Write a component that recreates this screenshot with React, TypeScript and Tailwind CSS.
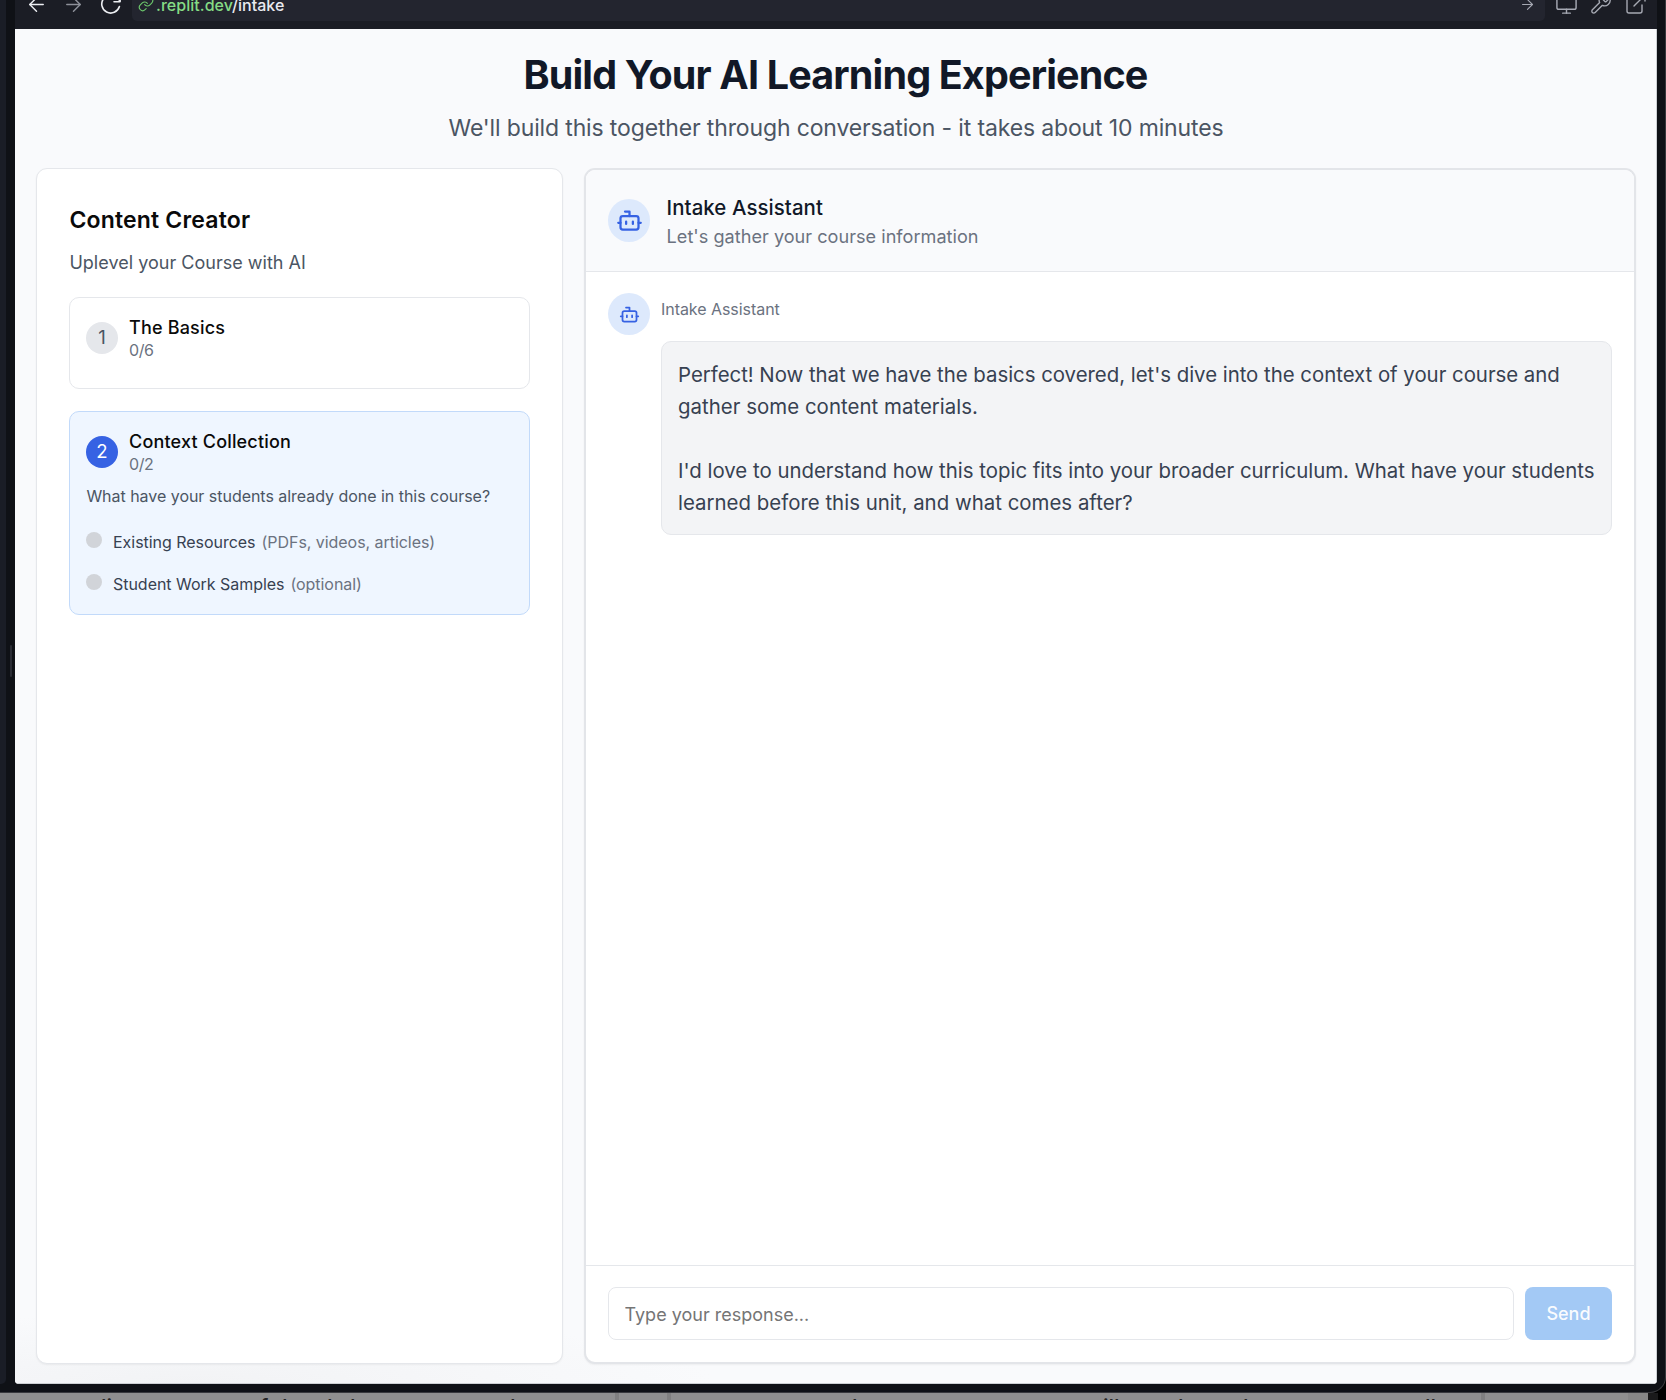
import type { ReactNode } from "react";
import { ArrowLeft, ArrowRight, Bot, ExternalLink, Link, Monitor, Wrench } from "lucide-react";

function Reload() {
  return (
    <svg viewBox="0 0 24 24" className="size-6" fill="none" stroke="currentColor" strokeWidth="1.6" strokeLinecap="round" strokeLinejoin="round">
      <path d="M20.4 14.6A9 9 0 1 1 18.6 6.2L21 9" />
      <path d="M21 3.6V9.8H15" />
    </svg>
  );
}

function BrowserBar() {
  return (
    <div className="h-[29px] shrink-0 overflow-hidden bg-[#1b1d25]">
      <div className="-mt-[20px] flex h-12 items-center text-[#a6a9b3]">
        <ArrowLeft className="ml-2.5 size-[23px] text-[#eceef2]" strokeWidth={1.5} />
        <ArrowRight className="ml-3.5 size-[23px] text-[#8d9099]" strokeWidth={1.5} />
        <div className="ml-3.5 text-[#eceef2]">
          <Reload />
        </div>
        <div className="ml-[9px] flex h-[34px] w-[1413px] items-center rounded-[5px] bg-[#23252f]">
          <Link className="ml-1.5 size-4 text-[#6cc76c]" strokeWidth={1.7} />
          <span className="ml-[2px] pt-[2px] text-base font-medium tracking-[0.002em] text-[#85dc85]">
            .replit.dev<span className="text-[#e9eaf0]">/intake</span>
          </span>
          <ArrowRight className="mr-[9px] ml-auto size-[17px]" strokeWidth={1.5} />
        </div>
        <Monitor className="ml-2.5 size-[23px]" strokeWidth={1.5} />
        <Wrench className="ml-3 size-[22px]" strokeWidth={1.5} />
        <ExternalLink className="ml-3 size-6" strokeWidth={1.4} />
      </div>
    </div>
  );
}

function StepHeader({ n, title, count, active }: { n: number; title: string; count: string; active?: boolean }) {
  return (
    <div className="flex items-start gap-[11px]">
      <div
        className={
          active
            ? "mt-[6px] flex size-8 items-center justify-center rounded-full bg-[#3662e3] text-[18.6px] text-white"
            : "mt-[6px] flex size-8 items-center justify-center rounded-full bg-[#e5e7eb] text-[18.6px] text-[#4b5563]"
        }
      >
        {n}
      </div>
      <div>
        <div className="text-[18px] leading-6 font-medium tracking-[0.01em] text-[#0a0a0a]">{title}</div>
        <div className="text-base leading-[21px] tracking-[-0.025em] text-[#6b7280]">{count}</div>
      </div>
    </div>
  );
}

function Resource({ name, note }: { name: string; note: string }) {
  return (
    <div className="flex h-[42px] items-start">
      <div className="mt-[11px] size-4 rounded-full bg-[#d1d4d9]" />
      <div className="ml-[11px] pt-[11px] text-base leading-[21px] tracking-[-0.002em] text-[#374151]">
        {name}
        <span className="ml-1.5 tracking-[-0.003em] text-[#6b7280]">{note}</span>
      </div>
    </div>
  );
}

function Avatar({ children }: { children: ReactNode }) {
  return (
    <div className="flex size-[42.4px] shrink-0 items-center justify-center rounded-full bg-[#dde9fc] text-[#3662e3]">
      {children}
    </div>
  );
}

function Sidebar() {
  return (
    <aside className="w-[527px] shrink-0 rounded-[11px] border border-[#e5e7eb] bg-white px-8 pt-[35px] shadow-xs">
      <h2 className="ml-[0.4px] text-[23px] leading-8 font-semibold tracking-[0.008em] text-[#0a0a0a]">Content Creator</h2>
      <p className="mt-3.5 ml-[0.4px] text-[18px] leading-[26px] tracking-[0.001em] text-[#4b5563]">
        Uplevel your Course with AI
      </p>
      <div className="mt-[21px] h-[92px] rounded-[10px] border border-[#e5e7eb] px-4 pt-[18px]">
        <StepHeader n={1} title="The Basics" count="0/6" />
      </div>
      <div className="mt-[22px] h-[204px] rounded-[10px] border border-[#c2dafa] bg-[#eff6ff] px-4 pt-[18px]">
        <StepHeader n={2} title="Context Collection" count="0/2" active />
        <p className="mt-[11px] ml-[0.4px] text-base leading-[21px] tracking-[-0.002em] whitespace-nowrap text-[#4b5563]">
          What have your students already done in this course?
        </p>
        <div className="mt-[14px]">
          <Resource name="Existing Resources" note="(PDFs, videos, articles)" />
          <Resource name="Student Work Samples" note="(optional)" />
        </div>
      </div>
    </aside>
  );
}

function Chat() {
  return (
    <section className="flex w-[1052px] shrink-0 flex-col overflow-hidden rounded-[11px] border-2 border-[#e3e5e9] bg-white shadow-xs">
      <header className="flex h-[102px] shrink-0 items-center border-b border-[#e5e7eb] bg-[#f9fafc] px-[22px]">
        <Avatar>
          <Bot className="size-[27px]" strokeWidth={2} />
        </Avatar>
        <div className="ml-[16.2px] pt-px">
          <div className="text-[20.4px] leading-[30px] font-medium tracking-[0.004em] text-[#111827]">Intake Assistant</div>
          <div className="text-[18.1px] leading-[27px] tracking-[0.001em] text-[#6b7280]">
            Let's gather your course information
          </div>
        </div>
      </header>
      <div className="flex flex-1 items-start px-[22px] pt-[21px]">
        <Avatar>
          <Bot className="size-[21px]" strokeWidth={2} />
        </Avatar>
        <div className="ml-[10.6px]">
          <div className="mt-[5px] text-base leading-[22px] tracking-[-0.003em] text-[#6b7280]">Intake Assistant</div>
          <div className="mt-[21px] h-[194px] w-[951px] rounded-[10px] border border-[#e5e7eb] bg-[#f3f4f6] px-4 pt-[17px] text-[20.4px] leading-8 whitespace-pre text-[#374151]">
            <p>
              <span className="tracking-[-0.001em]">
                Perfect! Now that we have the basics covered, let's dive into the context of your course and
              </span>
              {"\n"}
              <span className="tracking-[0.002em]">gather some content materials.</span>
            </p>
            <p className="mt-8">
              I'd love to understand how this topic fits into your broader curriculum. What have your students{"\n"}
              <span className="tracking-[0.001em]">learned before this unit, and what comes after?</span>
            </p>
          </div>
        </div>
      </div>
      <footer className="flex h-[97px] shrink-0 items-start gap-[11px] border-t border-[#e5e7eb] px-[22px] pt-[21px]">
        <input
          className="h-[53px] w-[906px] rounded-lg border border-[#e5e7eb] bg-white px-[15.5px] pt-px text-[18px] text-[#374151] outline-none placeholder:text-[#757575]"
          placeholder="Type your response..."
        />
        <button className="h-[53px] w-[87px] rounded-lg bg-[#a3c9f5] text-[18px] font-medium text-white/95">Send</button>
      </footer>
    </section>
  );
}

const glyphs: [number, string][] = [
  [101, "lit"], [190, "t"], [260, "f"], [274, "d"], [319, "d"], [350, "l"], [502, "d"],
  [729, "t"], [852, "l"], [969, "t"], [1103, "ilb"], [1178, "l"], [1243, "l"], [1385, "t"], [1425, "ll"],
];

function Backdrop() {
  return (
    <div className="relative h-[7px] overflow-hidden bg-black">
      <div className="flex h-full w-[1658px] bg-[#1a1a1b]">
        <div className="flex h-full w-[1648px] bg-[#8f8f8f]">
          <div className="ml-[615px] w-1 bg-[#808080]" />
          <div className="ml-12 w-1 bg-[#808080]" />
          <div className="ml-[810px] w-1 bg-[#808080]" />
          <div className="ml-[143px] flex-1 bg-[#878787]" />
        </div>
      </div>
      {glyphs.map(([left, text]) => (
        <span key={left} className="absolute top-0 text-[22px] leading-7 font-medium text-[#262626]" style={{ left }}>
          {text}
        </span>
      ))}
    </div>
  );
}

export default function App() {
  return (
    <div className="h-[1400px] w-[1666px] overflow-hidden bg-black font-['Inter',sans-serif]">
      <div className="flex h-[1393px] rounded-br-[16px] border-r border-b border-[#38393d] bg-[#0f1116]">
        <div className="h-[1384px] w-1.5 rounded-br-[5px] bg-[#1a1d26]" />
        <div className="flex w-[9px] items-center justify-end pr-[3px]">
          <div className="-mt-[70px] h-8 w-[2px] rounded bg-[#2a2c34]" />
        </div>
        <div className="flex h-[1384px] w-[1642px] flex-col overflow-hidden rounded-b-[4px] bg-[#f9fafc]">
          <BrowserBar />
          <main className="flex flex-1 flex-col border-r border-b border-[#cdd0d4] bg-[radial-gradient(ellipse_520px_70px_at_180px_100%,#f2f3f5,#f9fafc)]">
            <h1 className="mt-[22px] text-center text-[39.5px] leading-[48px] font-bold tracking-[-0.0216em] text-[#111827]">
              Build Your AI Learning Experience
            </h1>
            <p className="mt-[13px] pl-px text-center text-[23px] leading-8 tracking-[-0.0062em] text-[#4b5563]">
              We'll build this together through conversation - it takes about 10 minutes
            </p>
            <div className="mt-6 flex h-[1196px] gap-[21px] pl-[21px]">
              <Sidebar />
              <Chat />
            </div>
          </main>
        </div>
      </div>
      <Backdrop />
    </div>
  );
}
